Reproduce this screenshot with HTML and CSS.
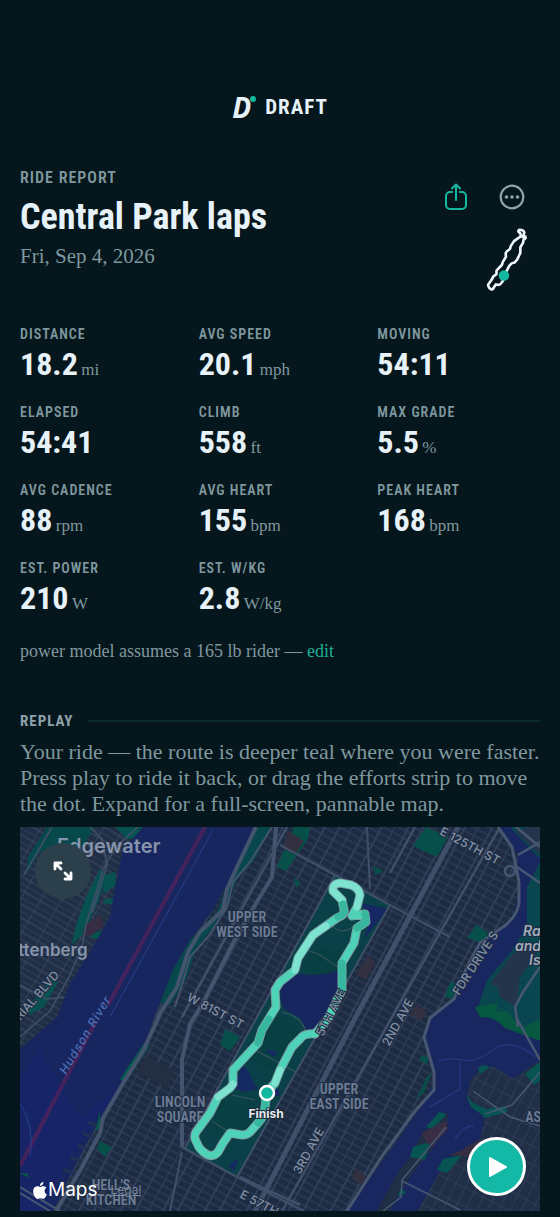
FILE: index.html
```html
<!DOCTYPE html>
<html lang="en">
  <head>
    <meta charset="UTF-8" />
    <meta name="viewport" content="width=device-width, initial-scale=1.0" />
    <title>Draft - Ride report</title>
    <link rel="stylesheet" href="styles.css">
  </head>
  <body>
    <header class="brand">
      <span class="brand-mark" aria-hidden="true">D</span>
      <span class="brand-name">DRAFT</span>
    </header>

    <main class="report">
      <section class="ride-header">
        <div class="ride-info">
          <p class="eyebrow">RIDE REPORT</p>
          <h1 class="ride-title">Central Park laps</h1>
          <p class="ride-date">Fri, Sep 4, 2026</p>
        </div>
        <div class="ride-side">
          <div class="ride-actions">
            <button class="icon-button icon-button--share" type="button" aria-label="Share">
              <svg width="24" height="30" viewBox="0 0 24 30" fill="none" stroke="currentColor" stroke-width="2" stroke-linecap="round" stroke-linejoin="round">
                <path d="M8 10H6a4 4 0 0 0-4 4v9a4 4 0 0 0 4 4h12a4 4 0 0 0 4-4v-9a4 4 0 0 0-4-4h-2" />
                <path d="M12 18V3M8 6.500l4-4 4 4" />
              </svg>
            </button>
            <button class="icon-button" type="button" aria-label="More">
              <svg width="26" height="26" viewBox="0 0 26 26">
                <circle cx="13" cy="13" r="11.3" fill="none" stroke="currentColor" stroke-width="2.2" />
                <g fill="currentColor">
                  <circle cx="7.5" cy="13" r="1.8" />
                  <circle cx="13" cy="13" r="1.8" />
                  <circle cx="18.5" cy="13" r="1.8" />
                </g>
              </svg>
            </button>
          </div>
          <svg class="ride-thumb" width="42" height="63" viewBox="165 48 192 288" aria-hidden="true">
            <use href="#route" fill="none" stroke="#eef6fb" stroke-width="12" stroke-linejoin="round" />
            <circle cx="247" cy="265" r="24" fill="#14b8a0" />
          </svg>
        </div>
      </section>

      <dl class="stats">
        <div class="stat"><dt>DISTANCE</dt><dd>18.2 <span class="unit">mi</span></dd></div>
        <div class="stat"><dt>AVG SPEED</dt><dd>20.1 <span class="unit">mph</span></dd></div>
        <div class="stat"><dt>MOVING</dt><dd>54:11</dd></div>
        <div class="stat"><dt>ELAPSED</dt><dd>54:41</dd></div>
        <div class="stat"><dt>CLIMB</dt><dd>558 <span class="unit">ft</span></dd></div>
        <div class="stat"><dt>MAX GRADE</dt><dd>5.5 <span class="unit">%</span></dd></div>
        <div class="stat"><dt>AVG CADENCE</dt><dd>88 <span class="unit">rpm</span></dd></div>
        <div class="stat"><dt>AVG HEART</dt><dd>155 <span class="unit">bpm</span></dd></div>
        <div class="stat"><dt>PEAK HEART</dt><dd>168 <span class="unit">bpm</span></dd></div>
        <div class="stat"><dt>EST. POWER</dt><dd>210 <span class="unit">W</span></dd></div>
        <div class="stat"><dt>EST. W/KG</dt><dd>2.8 <span class="unit">W/kg</span></dd></div>
      </dl>

      <p class="note">power model assumes a 165 lb rider — <a href="#edit">edit</a></p>

      <section class="replay">
        <h2 class="section-title">REPLAY</h2>
        <p class="replay-text">Your ride — the route is deeper teal where you were faster. Press play to ride it back, or drag the efforts strip to move the dot. Expand for a full-screen, pannable map.</p>

        <div class="map">
          <svg class="map-canvas" viewBox="0 0 520 384" preserveAspectRatio="xMidYMid slice" role="img" aria-label="Map of the ride in Central Park">
            <defs>
              <!-- Manhattan street grid -->
              <pattern id="grid" width="37" height="21" patternUnits="userSpaceOnUse" patternTransform="translate(162 320) rotate(28)">
                <path d="M0 0V21M13 0V21M26 0V21" stroke="#3a4962" stroke-width="1.3" />
                <path d="M0 1H37M0 8H37M0 15H37" stroke="#334159" stroke-width="1" />
              </pattern>
              <pattern id="grid-nj" width="18" height="12" patternUnits="userSpaceOnUse" patternTransform="rotate(30)">
                <path d="M0 0V12M0 0H18M0 6H18" fill="none" stroke="#3b4a62" stroke-width="1.2" />
              </pattern>
              <pattern id="grid-queens" width="10" height="17" patternUnits="userSpaceOnUse" patternTransform="rotate(27)">
                <path d="M0 0V17M0 0H10" fill="none" stroke="#384760" stroke-width="1.1" />
              </pattern>
              <path id="route" d="M247 265L245 280Q244 290 238 296L231 304Q228 308 222 308L210 306L203 316L198 325Q194 330 188 328Q179 323 177 316Q173 310 176 305L190 286L198 270L210 261L213 257V243L238 216L242 203L256 180L255 163L260 155L275 143L278 131L293 108L317 91Q325 88 324 83L322 73L313 64Q312 57 320 56L331 58Q339 61 340 68L337 80L332 89L345 87L346 95L337 101L334 116L322 136V163L318 170L309 190L295 207Q284 206 280 212L272 220L260 243L255 256L247 265" />
            </defs>

            <rect width="520" height="384" fill="#1d2c43" />
            <rect width="520" height="384" fill="url(#grid)" />

            <!-- New Jersey shore -->
            <path d="M0 0H123L103 23L95 60L90 90L67 130L50 156L37 190L0 222Z" fill="#202f46" />
            <path d="M0 0H123L103 23L95 60L90 90L67 130L50 156L37 190L0 222Z" fill="url(#grid-nj)" />
            <path d="M27 0H75L65 16L45 40L20 24L7 46L8 30Z" fill="#07484b" />
            <path d="M95 0H125L117 12L107 12ZM85 48L95 45L96 58L83 67ZM84 73L97 70L94 78L83 76ZM66 70L80 42L87 48L78 75L63 108L51 118L57 95ZM70 106L82 104L80 113L70 110ZM8 180L32 152L38 155L24 180L9 188Z" fill="#075250" />
            <path d="M65 98L80 88L84 98L72 108L62 110Z" fill="#362d42" />
            <g fill="none" stroke="#40506a" stroke-width="1.6">
              <path d="M118 0L96 20L83 42L76 66L66 98L62 120L49 150L30 184L0 210" />
              <path d="M70 0L82 12L87 38L72 86M32 0L4 48M60 20L42 44M0 158L26 172L49 170" />
            </g>

            <!-- Hudson -->
            <path d="M123 0H236L225 27L211 50L193 83L170 113L153 143L137 183L127 210L103 257L84 286L63 323L33 384H0V222L37 190L50 156L67 130L90 90L95 60L103 23Z" fill="#18265f" />
            <path d="M20 222L0 252V384H20L80 285L103 257L60 290Z" fill="#17236b" opacity=".65" />
            <path d="M68 295L82 300M62 306L78 313M58 318L72 324M50 330L67 337M43 342L60 349M37 354L53 361" stroke="#213053" stroke-width="3" />
            <path d="M185 0L88 178M76 194L0 339" stroke="#4c235c" stroke-width="4" opacity=".85" />
            <path d="M193 3L90 190M0 276Q15 300 10 330" fill="none" stroke="#24408c" stroke-width="1" />

            <!-- Riverside -->
            <path d="M238 0H251L235 32L217 52L206 80L193 100L176 122L166 153L150 178L140 176L153 143L170 113L197 85L211 50Z" fill="#07484d" />
            <path d="M143 191L128 212L129 220L105 256L100 252L120 222ZM80 284L80 300L75 305Z" fill="#07564d" />
            <g fill="none" stroke="#45546e">
              <path d="M236 0L217 40L207 62L203 83L180 105L168 125L157 160L141 185L123 224L102 258L83 291L80 306L62 340L36 384" stroke-width="4" />
              <path d="M252 0L230 35L213 55L207 80L188 110L170 130L162 158L155 180" stroke-width="2" />
              <path d="M256 0L252 50L235 78L213 116L183 176L170 197L162 233L162 320" stroke-width="4" />
            </g>

            <!-- small blocks and parks -->
            <g fill="#075049">
              <path d="M406 0L428 10L417 30L393 19ZM290 0H274L257 40L266 44L288 12Z" />
              <path d="M456 98L472 108L466 117L447 111ZM430 155L438 158L432 172L425 170Z" />
              <path d="M205 202L220 210L210 224L200 218ZM80 314L92 320L85 330L77 322ZM274 50L281 56L276 61ZM354 39L363 44L355 48ZM0 346H8V351Z" />
              <path d="M412 245L404 265L396 272L407 250ZM402 228L409 231L407 237L399 233Z" />
            </g>
            <path d="M125 230L155 243L147 261L117 245Z" fill="#242e43" />
            <path d="M268 4L284 14L275 28L262 21ZM348 129L355 135L346 153L336 147ZM396 178L407 185L401 194L390 188ZM335 343L346 349L342 358L332 352Z" fill="#33303f" />

            <!-- Central Park -->
            <path d="M315 48L370 78L217 350L165 321Z" fill="#0a4148" />
            <path d="M300 120L330 132L318 160L280 140ZM250 180L282 210L262 245L225 230ZM198 272L244 285L222 304L193 305Z" fill="#073f43" />
            <path d="M341 76L368 82L344 112L350 90Z" fill="#172764" />
            <path d="M260 160Q266 148 280 147Q296 150 318 144L321 158L303 198L291 205Q282 203 281 192L264 182Q260 172 260 160Z" fill="#18265f" />
            <path d="M222 237L229 245L235 258L241 264L250 270L260 268L258 262L244 260L226 265L215 262ZM247 222L258 225L255 230L248 226ZM208 339L218 332L214 345Z" fill="#152a63" />
            <path d="M310 96Q320 110 334 99M280 120L300 128L325 145M262 185Q284 190 286 207M233 222L276 245M212 268L235 273M192 294L215 309" fill="none" stroke="#35545d" stroke-width="1.2" />

            <!-- avenues -->
            <g fill="none" stroke="#40506a">
              <path d="M438 0L332 197L235 384" stroke-width="5" />
              <path d="M315 48L165 321M370 78L217 350" stroke-width="2" />
              <path d="M260 18L370 78L430 110M347 0L350 62M162 320L217 350L284 384M150 384L162 325" stroke-width="2" />
              <path d="M267 0L162 190M395 0L370 46M480 0L262 384M220 350L280 378" stroke-width="2.5" />
            </g>

            <!-- East River, Harlem River -->
            <path d="M478 0H520V384H327L403 277L415 253L403 207L410 191L433 173L447 140L460 116L493 90L500 60L497 26Z" fill="#18275f" />
            <path d="M520 0H490L520 32ZM520 35L507 60L507 100L490 126L467 153L457 183L473 193L520 210Z" fill="#0a4650" />
            <path d="M509 0H520V28L495 4ZM507 115L520 122L500 150L496 180L480 170L478 160L470 157L490 130Z" fill="#24344b" />
            <path d="M468 185L487 184L501 202L520 192V214L485 201ZM455 180L478 176L475 191L460 190Z" fill="#075840" />
            <path d="M520 233L493 252L475 240L463 240L450 253L447 273L465 290L460 313L423 340L397 384H520Z" fill="#202f46" />
            <path d="M520 233L493 252L475 240L463 240L450 253L447 273L465 290L460 313L423 340L397 384H520Z" fill="url(#grid-queens)" />
            <path d="M463 238L470 240L460 247L458 241ZM446 268L453 276L466 282L465 290L451 280ZM423 332L442 328L427 346L417 343ZM505 247L520 235V254L514 258ZM462 283L485 279L488 285L464 291Z" fill="#075553" />
            <path d="M440 324L462 311L450 330L428 328Z" fill="#332f41" />
            <path d="M427 285L428 297L410 325L393 345L373 377L370 384H357L375 350L390 330L403 305Z" fill="#202f46" />
            <path d="M427 287L419 285L406 300L412 302ZM393 320L410 315L405 333L390 330ZM381 360L386 366L378 370Z" fill="#075553" />
            <path d="M409 302L426 294L428 302L412 320L407 316L402 307Z" fill="#3a2e44" />
            <path d="M418 234Q430 230 443 233T473 223T516 230M440 235V262L410 280M435 312Q444 298 454 299" fill="none" stroke="#23367b" stroke-width="1.5" />
            <g fill="none" stroke="#485771">
              <path d="M478 0L492 20L499 55L499 77Q495 93 480 102L460 116L447 140L434 172L410 191L404 210L414 245L414 263L395 284L362 329L327 384" stroke-width="3" />
              <path d="M497 40L520 56M496 0L520 20M498 28L520 15M520 140L503 165L495 180L498 200M496 190L520 233" stroke-width="2.5" />
              <circle cx="490" cy="44" r="5" stroke-width="2.5" />
              <path d="M426 300L392 341L382 353L381 370L363 384M382 354L440 383M453 264L490 290L520 299M520 245L492 278L465 287" stroke-width="1.5" />
              <path d="M0 366L30 384M0 360L40 384" stroke-width="2" />
            </g>

            <!-- map labels -->
            <g class="map-labels">
              <text class="place" x="37" y="26">Edgewater</text>
              <text class="place place--sm" x="-25" y="129">Guttenberg</text>
              <g class="district">
                <text x="227" y="95">UPPER</text>
                <text x="227" y="110">WEST SIDE</text>
                <text x="319" y="267">UPPER</text>
                <text x="319" y="282">EAST SIDE</text>
                <text x="160" y="280">LINCOLN</text>
                <text x="160" y="295">SQUARE</text>
                <text x="91" y="363">HELL'S</text>
                <text x="91" y="378">KITCHEN</text>
                <text x="531" y="295">ASTORIA</text>
              </g>
              <g class="street">
                <text transform="translate(166 173) rotate(28)">W 81ST ST</text>
                <text transform="translate(419 7) rotate(28)">E 125TH ST</text>
                <text transform="translate(219 370) rotate(28)">E 57TH ST</text>
                <text transform="translate(369 220) rotate(-61)">2ND AVE</text>
                <text transform="translate(280 348) rotate(-61)">3RD AVE</text>
                <text transform="translate(439 169) rotate(-57)">FDR DRIVE S</text>
                <text transform="translate(-25 223) rotate(-49)">MEMORIAL BLVD</text>
              </g>
              <text class="river" transform="translate(46 248) rotate(-59)">Hudson River</text>
              <g class="island">
                <text x="503" y="109">Randalls</text>
                <text x="495" y="124">and Wards</text>
                <text x="509" y="138">Islands</text>
              </g>
            </g>

            <!-- ride -->
            <g fill="none" stroke-linejoin="round" stroke-linecap="round">
              <use href="#route" stroke="#7b9b9f" stroke-width="9" />
              <use href="#route" stroke="#4ed3b9" stroke-width="7" />
              <path d="M275 143L278 131L293 108L306 99M322 73L313 64Q312 57 320 56L331 58Q339 61 340 68L337 80" stroke="#7de2cf" stroke-width="7" />
              <path d="M322 136V163M345 87L346 95L337 101M318 90Q325 87 324 83L323 77M238 216L242 203L249 192M245 273V280Q244 290 238 296" stroke="#36b79e" stroke-width="7" />
              <path d="M260 243L255 256M198 270L210 261L213 257" stroke="#7de2cf" stroke-width="7" />
            </g>
            <g class="map-labels street">
              <text transform="translate(303 210) rotate(-63)">5TH AVE</text>
            </g>
            <circle cx="247" cy="266" r="7" fill="#14b8a0" stroke="#fff" stroke-width="2.4" />
            <text class="finish" x="246" y="291">Finish</text>
          </svg>

          <button class="map-expand" type="button" aria-label="Expand map">
            <svg width="20" height="20" viewBox="0 0 20 20" fill="none" stroke="currentColor" stroke-width="2.8" stroke-linecap="round" stroke-linejoin="round">
              <path d="M2 8V2h6M3 3l5 5M18 12v6h-6M17 17l-5-5" />
            </svg>
          </button>
          <div class="map-credit">
            <svg width="14" height="17" viewBox="2 0 20 24" fill="currentColor" aria-hidden="true">
              <path d="M12.152 6.896c-.948 0-2.415-1.078-3.96-1.04-2.04.027-3.91 1.183-4.961 3.014-2.117 3.675-.546 9.103 1.519 12.09 1.013 1.454 2.208 3.09 3.792 3.039 1.52-.065 2.09-.987 3.935-.987 1.831 0 2.35.987 3.96.948 1.637-.026 2.676-1.48 3.676-2.948 1.156-1.688 1.636-3.325 1.662-3.415-.039-.013-3.182-1.221-3.22-4.857-.026-3.04 2.48-4.494 2.597-4.559-1.429-2.09-3.623-2.324-4.39-2.376-2-.156-3.675 1.09-4.61 1.09zM15.53 3.83c.843-1.012 1.4-2.427 1.245-3.83-1.207.052-2.662.805-3.532 1.818-.78.896-1.454 2.338-1.273 3.714 1.338.104 2.715-.688 3.559-1.701" />
            </svg>
            <span>Maps</span>
            <a href="#legal">Legal</a>
          </div>
          <button class="map-play" type="button" aria-label="Play">
            <svg width="20" height="22" viewBox="0 0 20 22" fill="currentColor" stroke="currentColor" stroke-width="2" stroke-linejoin="round">
              <path d="M2 2L18 11L2 20Z" />
            </svg>
          </button>
        </div>
      </section>
    </main>
  </body>
</html>
```
FILE: styles.css
```css
* {
  box-sizing: border-box;
}

body {
  margin: 0;
  padding: 92px 20px 6px;
  background-color: #05161c;
  color: #e6f1f8;
  font-family: "Roboto Condensed", "Liberation Sans Narrow", Roboto, sans-serif;
}

h1,
h2,
p,
dl,
dd {
  margin: 0;
}

button {
  padding: 0;
  border: 0;
  background: none;
  cursor: pointer;
}

svg {
  display: block;
}

/* header */
.brand {
  display: flex;
  align-items: center;
  justify-content: center;
  gap: 9px;
  height: 30px;
}

.brand-mark {
  position: relative;
  padding-right: 5px;
  font-family: "Open Sans", sans-serif;
  font-size: 28px;
  font-style: italic;
  font-weight: 700;
  line-height: 30px;
}

.brand-mark::after {
  content: "";
  position: absolute;
  top: 4px;
  right: 0;
  width: 6px;
  height: 6px;
  border-radius: 50%;
  background-color: #14b8a0;
}

.brand-name {
  font-size: 21px;
  font-weight: 700;
  letter-spacing: 1px;
}

/* ride title */
.ride-header {
  display: flex;
  justify-content: space-between;
  margin-top: 46px;
}

.eyebrow {
  color: #7f989f;
  font-size: 16px;
  font-weight: 600;
  line-height: 20px;
  letter-spacing: 1px;
}

.ride-title {
  margin-top: 8px;
  font-size: 36px;
  font-weight: 700;
  line-height: 42px;
}

.ride-date {
  margin-top: 5px;
  color: #7f989f;
  font-family: "Liberation Serif", serif;
  font-size: 21px;
  line-height: 26px;
}

.ride-side {
  display: flex;
  flex-direction: column;
  align-items: flex-end;
  padding: 14px 12px 0 0;
}

.ride-actions {
  display: flex;
  align-items: center;
  gap: 31px;
  padding-right: 3px;
}

.icon-button {
  color: #8fa3ad;
}

.icon-button--share {
  color: #14b8a0;
}

.ride-thumb {
  margin-top: 16px;
}

/* stats */
.stats {
  display: grid;
  grid-template-columns: repeat(3, 1fr);
  gap: 18px 16px;
  margin-top: 33px;
}

.stat dt {
  color: #7f989f;
  font-size: 14px;
  font-weight: 600;
  line-height: 20px;
  letter-spacing: 1px;
}

.stat dd {
  font-size: 32px;
  font-weight: 700;
  line-height: 40px;
}

.unit {
  margin-left: -4px;
  color: #7f989f;
  font-family: "Liberation Serif", serif;
  font-size: 17px;
  font-weight: 400;
  line-height: 1;
}

.note {
  margin-top: 21px;
  color: #7f989f;
  font-family: "Liberation Serif", serif;
  font-size: 18px;
  line-height: 24px;
}

.note a {
  color: #1fae98;
  text-decoration: none;
}

/* replay */
.replay {
  margin-top: 48px;
}

.section-title {
  display: flex;
  align-items: center;
  gap: 14px;
  color: #8fa3ad;
  font-size: 15px;
  font-weight: 700;
  line-height: 20px;
  letter-spacing: 1px;
}

.section-title::after {
  content: "";
  flex: 1;
  height: 2px;
  background-color: #0c2a31;
}

.replay-text {
  margin-top: 8px;
  color: #7f989f;
  font-family: "Liberation Serif", serif;
  font-size: 22px;
  line-height: 26px;
}

/* map */
.map {
  position: relative;
  margin-top: 10px;
  overflow: hidden;
}

.map-canvas {
  width: 100%;
  height: auto;
}

.map-labels text {
  fill: #8390a3;
  stroke: #1d2c43;
  stroke-width: 2px;
  paint-order: stroke;
}

.map-labels .place {
  fill: #8794ab;
  stroke: none;
  font-family: Inter, sans-serif;
  font-size: 20px;
  font-weight: 600;
}

.map-labels .place--sm {
  font-size: 17px;
}

.map-labels .district text {
  fill: #6d7c94;
  font-size: 14px;
  font-weight: 600;
  text-anchor: middle;
}

.street text {
  font-family: Inter, sans-serif;
  font-size: 12px;
  font-weight: 500;
}

.map-labels .river {
  fill: #4b6fb5;
  stroke: none;
  font-family: Inter, sans-serif;
  font-size: 12px;
  font-style: italic;
  font-weight: 500;
  letter-spacing: 1px;
}

.map-labels .island text {
  fill: #a3abba;
  font-family: Inter, sans-serif;
  font-size: 14px;
  font-style: italic;
  font-weight: 600;
}

.finish {
  fill: #e6ecf0;
  stroke: #1c2a38;
  stroke-width: 2px;
  paint-order: stroke;
  font-family: Inter, sans-serif;
  font-size: 12px;
  font-weight: 700;
  text-anchor: middle;
}

.map-expand {
  position: absolute;
  top: 16px;
  left: 15px;
  display: flex;
  align-items: center;
  justify-content: center;
  width: 56px;
  height: 56px;
  border-radius: 50%;
  background-color: #2b404b;
  color: #fff;
}

.map-credit {
  position: absolute;
  bottom: 9px;
  left: 13px;
  display: flex;
  align-items: center;
  gap: 1px;
  color: #fff;
  font-family: Inter, sans-serif;
  font-size: 19px;
  line-height: 24px;
}

.map-credit a {
  margin-left: 12px;
  color: #78869d;
  font-size: 12px;
}

.map-play {
  position: absolute;
  right: 14px;
  bottom: 15px;
  display: flex;
  align-items: center;
  justify-content: center;
  width: 59px;
  height: 59px;
  padding-left: 3px;
  border: 3px solid #fff;
  border-radius: 50%;
  background-color: #14b8a6;
  color: #fff;
}
```
